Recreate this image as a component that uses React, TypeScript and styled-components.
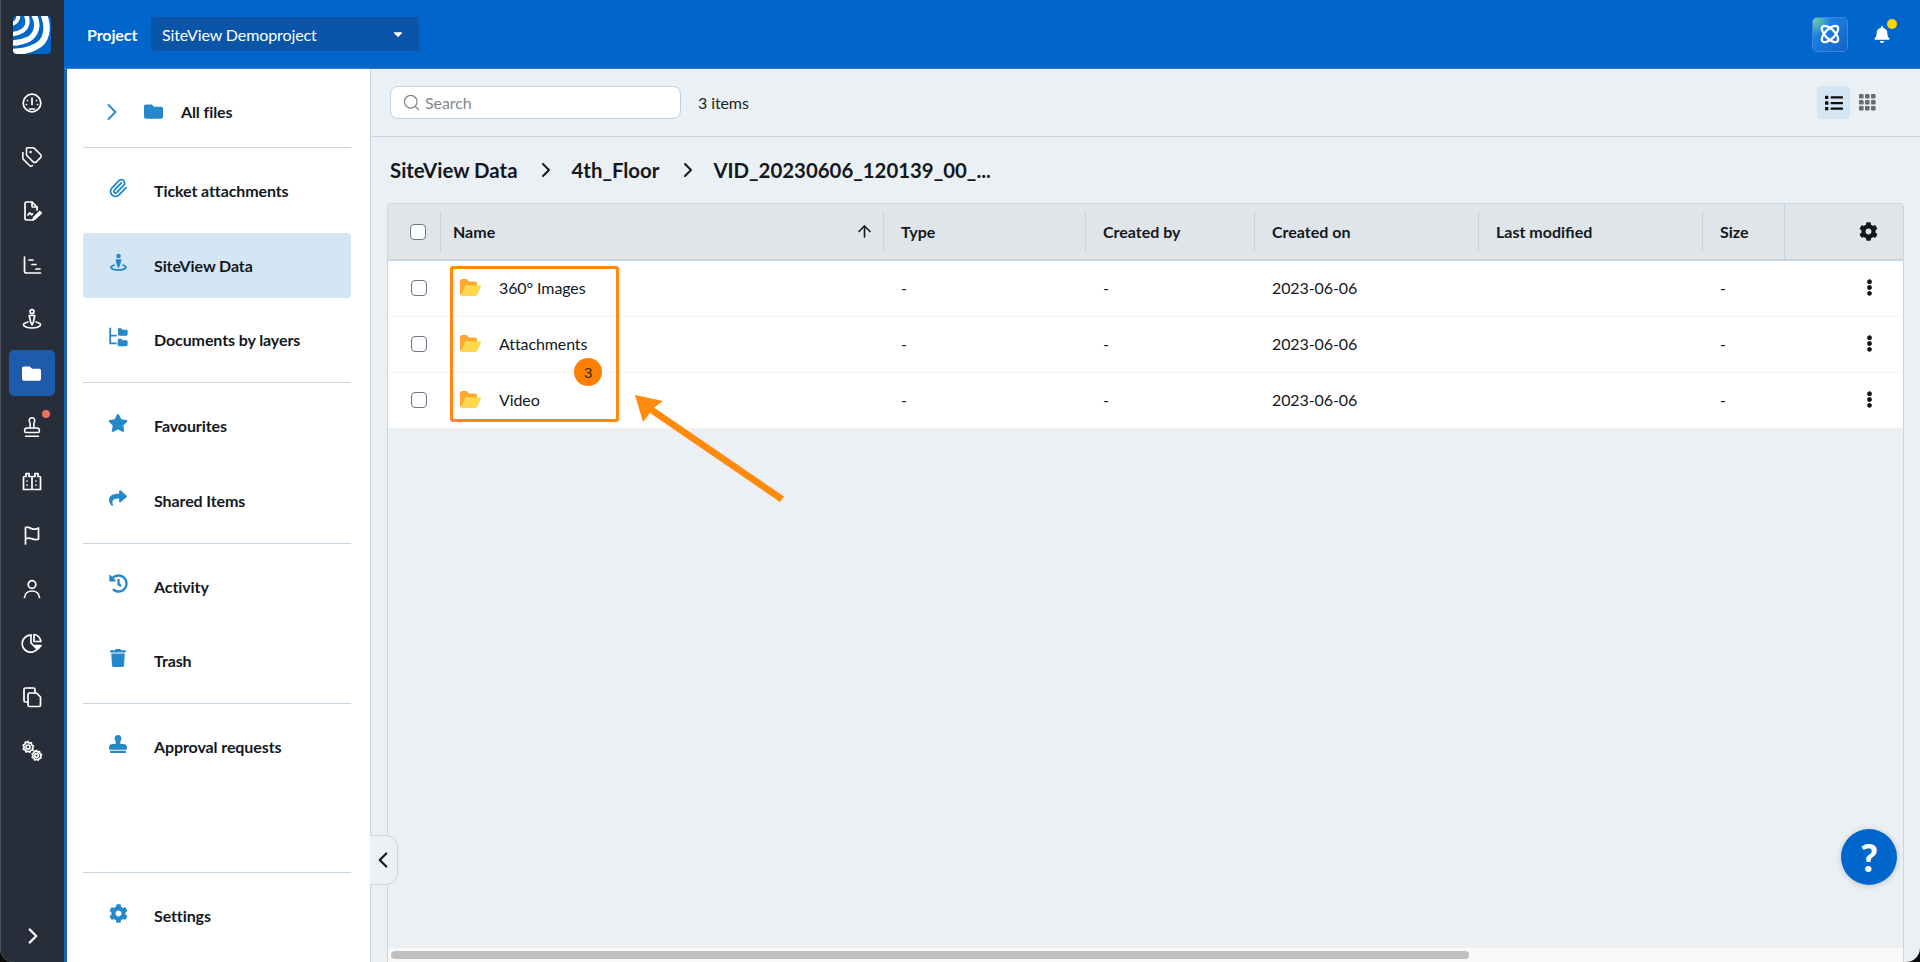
import { ReactNode } from "react";
import styled, { createGlobalStyle } from "styled-components";
import {
  FaBell,
  FaCaretDown,
  FaCog,
  FaEllipsisV,
  FaFolder,
  FaHistory,
  FaList,
  FaShare,
  FaStamp,
  FaStar,
  FaTrash,
} from "react-icons/fa";
import { ArrowUp, ChevronLeft, ChevronRight, Paperclip, Search, Stamp, Tags } from "lucide-react";

const COLUMNS = "52px 443px 202px 169px 224px 224px 82px 1fr";

const GlobalStyle = createGlobalStyle`
  html, body {
    margin: 0;
    height: 100%;
    background: #0b0b0b;
    font-family: "Lato", "Liberation Sans", sans-serif;
    letter-spacing: -0.1px;
    overflow: hidden;
  }
  #root { height: 100%; }
  * { box-sizing: border-box; }
`;

const Shell = styled.div`
  position: relative;
  display: flex;
  height: 962px;
  border-radius: 0 0 14px 14px;
  overflow: hidden;
  background: #ebf0f5;
`;

/* left rail */
const Rail = styled.nav`
  width: 64px;
  flex: none;
  display: flex;
  flex-direction: column;
  align-items: center;
  background: #272e3a;
  border-left: 1px solid #4a515c;
  padding: 16px 2px 13px 0;
`;

const Logo = styled.div`
  width: 38px;
  height: 38px;
  margin-bottom: 26px;
  border-radius: 4px;
  overflow: hidden;
  svg { display: block; }
`;

const RailButton = styled.div<{ $active?: boolean }>`
  position: relative;
  width: 46px;
  height: 46px;
  margin-bottom: 8px;
  display: flex;
  align-items: center;
  justify-content: center;
  color: #fff;
  border-radius: 5px;
  background: ${({ $active }) => ($active ? "#1c5cab" : "transparent")};
`;

const RailDot = styled.span`
  position: absolute;
  top: 6px;
  right: 5px;
  width: 8px;
  height: 8px;
  border-radius: 50%;
  background: #f26d5f;
`;

const RailExpand = styled.div`
  margin: auto 0 0 2px;
  color: #fff;
  display: flex;
`;

/* main */
const Main = styled.div`
  flex: 1;
  min-width: 0;
  display: flex;
  flex-direction: column;
`;

const TopBar = styled.header`
  height: 69px;
  flex: none;
  display: flex;
  align-items: center;
  background: #0066cc;
  border-bottom: 1px solid #2b7fd4;
  padding: 0 30px 0 23px;
  color: #fff;
  font-size: 16px;
`;

const ProjectLabel = styled.span`
  font-weight: 700;
  width: 64px;
`;

const ProjectSelect = styled.div`
  width: 268px;
  height: 34px;
  display: flex;
  align-items: center;
  justify-content: space-between;
  padding: 0 14px 0 11px;
  background: #0a55a8;
  border-radius: 2px;
`;

const TopActions = styled.div`
  margin-left: auto;
  display: flex;
  align-items: center;
  gap: 26px;
`;

const AiButton = styled.div`
  width: 36px;
  height: 35px;
  display: flex;
  align-items: center;
  justify-content: center;
  border-radius: 5px;
  border: 1px solid #3a86e2;
  background: radial-gradient(circle at 0 0, #7ed58f 0, rgba(126, 213, 143, 0) 38%),
    linear-gradient(135deg, #1a90ea 0%, #1560c8 100%);
`;

const Bell = styled.div`
  position: relative;
  display: flex;
  width: 16px;
  color: #fff;
`;

const BellDot = styled.span`
  position: absolute;
  top: -7px;
  right: -7px;
  width: 10px;
  height: 10px;
  border-radius: 50%;
  background: #ffd500;
`;

const Body = styled.div`
  flex: 1;
  min-height: 0;
  display: flex;
`;

/* folder sidebar */
const Sidebar = styled.aside`
  width: 307px;
  flex: none;
  display: flex;
  flex-direction: column;
  background: #fff;
  border-left: 3px solid #1c62b3;
  border-right: 1px solid #c6d3e1;
  padding: 0 19px 0 16px;
`;

const Group = styled.div<{ $first?: boolean; $plain?: boolean; $bottom?: boolean }>`
  display: flex;
  flex-direction: column;
  gap: 9.5px;
  padding: ${({ $first }) => ($first ? "10px 0 3px" : "10px 0")};
  border-bottom: 1px solid #c8d5e3;
  ${({ $plain }) => $plain && "border-bottom: 0;"}
  ${({ $bottom }) => $bottom && "margin-top: auto; border-bottom: 0; border-top: 1px solid #c8d5e3; padding-bottom: 14px;"}
`;

const Item = styled.div<{ $active?: boolean }>`
  height: 65px;
  display: flex;
  align-items: center;
  gap: 24px;
  padding-left: 23px;
  font-size: 16px;
  font-weight: 700;
  color: #14181d;
  border-radius: 4px;
  background: ${({ $active }) => ($active ? "#d4e6f4" : "transparent")};
`;

const ItemIcon = styled.span`
  width: 24px;
  height: 24px;
  display: flex;
  align-items: center;
  justify-content: center;
  margin-bottom: 5px;
  color: #2488c9;
`;

const RootIcons = styled.span`
  display: flex;
  align-items: center;
  gap: 18px;
  margin: 0 -1px 0 -8px;
  color: #2488c9;
`;

const RootLabel = styled.span`
  margin-left: -5px;
`;

/* content */
const Content = styled.section`
  position: relative;
  flex: 1;
  min-width: 0;
  display: flex;
  flex-direction: column;
`;

const Toolbar = styled.div`
  height: 68px;
  flex: none;
  display: flex;
  align-items: center;
  padding: 0 16px 0 19px;
  border-bottom: 1px solid #c8d5e3;
  font-size: 16px;
  color: #1b1f24;
`;

const SearchBox = styled.div`
  width: 291px;
  height: 33px;
  display: flex;
  align-items: center;
  gap: 4px;
  padding-left: 11px;
  background: #fff;
  border: 1px solid #c3d1df;
  border-radius: 8px;
  color: #7f8790;
`;

const ItemCount = styled.span`
  margin-left: 17px;
`;

const ViewToggle = styled.div`
  margin-left: auto;
  display: flex;
  align-items: center;
  gap: 9px;
  margin-right: 28px;
`;

const ViewButton = styled.div<{ $active?: boolean }>`
  width: 33px;
  height: 33px;
  display: flex;
  align-items: center;
  justify-content: center;
  border-radius: 4px;
  background: ${({ $active }) => ($active ? "#d4e6f4" : "transparent")};
  color: #0d0d0d;
`;

const Breadcrumb = styled.div`
  height: 66px;
  flex: none;
  display: flex;
  align-items: center;
  padding-left: 19px;
  font-size: 20.4px;
  font-weight: 700;
  letter-spacing: 0;
  color: #14181d;
`;

const CrumbSep = styled.span`
  display: flex;
  width: 54px;
  justify-content: center;
  padding-left: 4px;
`;

const Table = styled.div`
  flex: 1;
  min-height: 0;
  display: flex;
  flex-direction: column;
  margin: 0 16px;
  border: 1px solid #c8d5e3;
  border-bottom: 0;
  border-radius: 4px 4px 0 0;
`;

const HeadRow = styled.div`
  height: 57px;
  flex: none;
  display: grid;
  grid-template-columns: ${COLUMNS};
  align-items: center;
  background: #e0e5ea;
  border-bottom: 2px solid #c8d5e3;
  font-size: 16px;
  font-weight: 700;
  letter-spacing: 0;
  color: #14181d;
`;

const HeadCell = styled.div<{ $tight?: boolean }>`
  height: 41px;
  display: flex;
  align-items: center;
  justify-content: space-between;
  padding-left: ${({ $tight }) => ($tight ? "12px" : "17px")};
  border-left: 1px solid #c8d2dc;
`;

const GearHead = styled.div`
  height: 100%;
  display: flex;
  align-items: center;
  justify-content: flex-end;
  padding-right: 25px;
  border-left: 1px solid #c8d5e3;
`;

const CheckCell = styled.div<{ $row?: boolean }>`
  display: flex;
  justify-content: center;
  padding-left: ${({ $row }) => ($row ? "10px" : "8px")};
`;

const Checkbox = styled.span`
  width: 16px;
  height: 16px;
  background: #fff;
  border: 1.5px solid #6d7784;
  border-radius: 4px;
`;

const SortIcon = styled.span`
  display: flex;
  margin-right: 9px;
`;

const Row = styled.div`
  height: 56px;
  flex: none;
  display: grid;
  grid-template-columns: ${COLUMNS};
  align-items: center;
  padding-bottom: 2px;
  background: #fff;
  border-bottom: 1px solid #f1f3f5;
  font-size: 16px;
  color: #14181d;
`;

const Cell = styled.div`
  padding-left: 18px;
`;

const NameCell = styled.div`
  display: flex;
  align-items: center;
  gap: 18px;
  padding-left: 20px;
`;

const KebabCell = styled.div`
  display: flex;
  justify-content: flex-end;
  padding-right: 25px;
`;

const Scroller = styled.div`
  margin-top: auto;
  height: 15px;
  flex: none;
  display: flex;
  align-items: center;
  padding-left: 3px;
  background: #f8f8f8;
  border-top: 1px solid #eeeeee;
`;

const ScrollThumb = styled.div`
  width: 1078px;
  height: 8px;
  border-radius: 4px;
  background: #bfbfbf;
`;

/* things lying over the page */
const CollapseHandle = styled.div`
  position: absolute;
  left: -1px;
  top: 766px;
  width: 28px;
  height: 50px;
  display: flex;
  align-items: center;
  color: #14181d;
  background: #ebf0f5;
  border: 1px solid #c8d5e3;
  border-left: 0;
  border-radius: 0 12px 12px 0;
`;

const HelpButton = styled.div`
  position: absolute;
  right: 23px;
  top: 760px;
  width: 56px;
  height: 56px;
  display: flex;
  align-items: center;
  justify-content: center;
  border-radius: 50%;
  background: #0066cc;
  box-shadow: 0 1px 6px rgba(0, 0, 0, 0.18);
  color: #fff;
  font-size: 38px;
  font-weight: 900;
`;

const Highlight = styled.div`
  position: absolute;
  left: 450px;
  top: 266px;
  width: 169px;
  height: 156px;
  border: 3px solid #ff8a0d;
  border-radius: 3px;
`;

const StepBadge = styled.div`
  position: absolute;
  left: 574px;
  top: 358px;
  width: 28px;
  height: 28px;
  display: flex;
  align-items: center;
  justify-content: center;
  border-radius: 50%;
  background: #ff8000;
  color: #3a2a10;
  font-family: "Liberation Sans", sans-serif;
  font-size: 15px;
`;

const Arrow = styled.svg`
  position: absolute;
  left: 630px;
  top: 390px;
`;

function Ic({ children, size = 24 }: { children: ReactNode; size?: number }) {
  return (
    <svg width={size} height={size} viewBox="0 0 24 24" fill="none" stroke="currentColor" strokeWidth="1.7" strokeLinecap="round" strokeLinejoin="round">
      {children}
    </svg>
  );
}

function PinIcon({ size = 24 }: { size?: number }) {
  return (
    <svg width={size} height={size} viewBox="0 0 24 24" fill="currentColor">
      <circle cx="12" cy="4.5" r="2.6" />
      <path d="M8.5 8.2h7l-1.700 6.800L12 18.500 10.200 15z" />
      <path d="M7.500 14C4.300 14.800 2.500 16 2.500 17.600 2.500 19.800 6.700 21.500 12 21.500s9.500-1.700 9.500-3.900c0-1.600-1.800-2.800-5-3.600l-.4 1.800c1.900.5 3.100 1.100 3.100 1.800 0 .9-3.100 1.900-7.200 1.900s-7.200-1-7.200-1.900c0-.7 1.200-1.300 3.100-1.800z" />
    </svg>
  );
}

function LayersIcon() {
  return (
    <svg width="22" height="22" viewBox="0 0 24 24" fill="currentColor">
      <path d="M2.500 2h2v7.500h6v2h-6V18h6v2h-8z" />
      <path d="M12 2.500h3.500l1.500 1.500h4a1.500 1.500 0 0 1 1.500 1.500V9a1.500 1.500 0 0 1-1.500 1.500h-8A1.500 1.500 0 0 1 12 9z" />
      <path d="M12 14h3.500l1.500 1.500h4a1.500 1.500 0 0 1 1.500 1.500v3.500A1.500 1.500 0 0 1 21 22h-8a1.500 1.500 0 0 1-1.500-1.500z" />
    </svg>
  );
}

function FolderOpen() {
  return (
    <svg width="21" height="17" viewBox="0 0 21 17">
      <path d="M0 2a2 2 0 0 1 2-2h5l2 2.500h6a2 2 0 0 1 2 2V7H5L1.500 16H1a1 1 0 0 1-1-1z" fill="#ffa92e" />
      <path d="M5 6.200h15a1 1 0 0 1 .9 1.400l-3.400 8.200a2 2 0 0 1-1.800 1.200H1z" fill="#ffd84d" />
    </svg>
  );
}

function GridIcon() {
  const cells = [0, 6, 12];
  return (
    <svg width="17" height="17" viewBox="0 0 17 17" fill="#6b6b6b">
      {cells.flatMap((y) => cells.map((x) => <rect key={`${x}-${y}`} x={x} y={y} width="4.6" height="4.6" rx="1.1" />))}
    </svg>
  );
}

const railIcons: ReactNode[] = [
  <Ic key="gauge">
    <circle cx="12" cy="12" r="8.8" />
    <path d="M12 7v6.500M7.500 9.500v.01M16.500 9.500v.01M6.500 13.500v.01M17.500 13.500v.01M9.500 18h5" />
  </Ic>,
  <Tags key="tags" size={22} strokeWidth={1.7} />,
  <Ic key="file">
    <path d="M13 21H6.500A1.500 1.500 0 0 1 5 19.500v-15A1.500 1.500 0 0 1 6.500 3H12l5 5v3" />
    <path d="M12 3v4a1 1 0 0 0 1 1h4M8 16l1.800-2.200 1.700 2 1-1" />
    <path d="M15 20l-2 .8.7-2.200 6-6 1.500 1.500z" fill="currentColor" />
  </Ic>,
  <Ic key="chart">
    <path d="M4.500 4v14a2 2 0 0 0 2 2h14M9 7h4M12 11.500h4M16 16h4" />
  </Ic>,
  <Ic key="pin">
    <circle cx="12" cy="4.600" r="2" />
    <path d="M9.200 8.500h5.600L13.400 15 12 18l-1.400-3z" />
    <path d="M8 15c-2.700.6-4.500 1.600-4.500 2.800C3.500 19.600 7.300 21 12 21s8.500-1.400 8.500-3.200c0-1.200-1.800-2.200-4.500-2.800" />
  </Ic>,
  <FaFolder key="folder" size={19} />,
  <Stamp key="stamp" size={22} strokeWidth={1.7} />,
  <Ic key="building">
    <path d="M3.500 20.500V8.500a1 1 0 0 1 1-1H6V4.500h3v3h6V4.500h3v3h1.500a1 1 0 0 1 1 1v12zM12 7.500v13M7 12v.01M7 16v.01M16 12v.01M16 16v.01" />
  </Ic>,
  <Ic key="flag">
    <path d="M5.500 21V4.500C9 3 11 6.800 15 6.200c1.300-.2 2.500-.7 3.500-1.200v11c-3.800 2-6.700-1-10-.8-1.100 0-2.200.3-3 .8" />
  </Ic>,
  <Ic key="user">
    <circle cx="12" cy="7.500" r="3.800" />
    <path d="M4.500 20.500c.4-4.200 3.700-6.500 7.500-6.500s7.100 2.300 7.500 6.500" />
  </Ic>,
  <Ic key="pie">
    <path d="M11 4.200A8.500 8.500 0 1 0 18 17" />
    <path d="M11 4.200V12l5 5" />
    <path d="M14 3.500a7.500 7.500 0 0 1 6.800 7H14z" />
    <path d="M15 14.500h6l-3 3.500z" fill="currentColor" />
  </Ic>,
  <Ic key="copy">
    <path d="M10 3H5.500A1.500 1.500 0 0 0 4 4.500v11A1.500 1.500 0 0 0 5.500 17H8" />
    <path d="M10 3h3.500A1.500 1.500 0 0 1 15 4.500V8" />
    <path d="M9.500 8h7l4 4v8a1.500 1.500 0 0 1-1.500 1.500H9.500A1.500 1.500 0 0 1 8 20V9.500A1.500 1.500 0 0 1 9.500 8z" />
  </Ic>,
  <Ic key="gears">
    <circle cx="8" cy="8" r="2" />
    <path d="M8 2.500l1.200 1.700 2.100-.4.3 2.100 1.900 1-1 1.900.5 2-2.100.5-1 1.900-1.900-1-2 .7-.7-2-2-.8.8-2-1-1.900 1.900-1 .4-2.100 2.100.4z" />
    <circle cx="16.500" cy="16.500" r="1.800" />
    <path d="M16.500 11.500l1.100 1.500 1.900-.3.3 1.900 1.700.9-.9 1.700.4 1.800-1.900.5-.9 1.700-1.700-.9-1.800.6-.6-1.800-1.800-.7.7-1.800-.9-1.700 1.700-.9.4-1.900 1.900.4z" />
  </Ic>,
];

const rows = ["360° Images", "Attachments", "Video"];

export default function App() {
  return (
    <>
      <GlobalStyle />
      <Shell>
        <Rail>
          <Logo>
            <svg width="38" height="38" viewBox="0 0 38 38">
              <rect width="38" height="38" fill="#0066cc" />
              <g fill="none" stroke="#fff">
                <path d="M5 -1C6 3 3 7 -1 8" strokeWidth="4" />
                <path d="M13 -1C16 6 14 12 9 15C6 17 3 18 -1 18" strokeWidth="4.500" />
                <path d="M21 -1C26 8 24 18 16 23C10 26 5 27 -1 27" strokeWidth="5.500" />
                <path d="M31 -1C36 12 34 26 22 31C14 35 6 36 -1 36" strokeWidth="6.500" />
              </g>
            </svg>
          </Logo>
          {railIcons.map((icon, i) => (
            <RailButton key={i} $active={i === 5}>
              {icon}
              {i === 6 && <RailDot />}
            </RailButton>
          ))}
          <RailExpand>
            <ChevronRight size={26} strokeWidth={2.2} />
          </RailExpand>
        </Rail>

        <Main>
          <TopBar>
            <ProjectLabel>Project</ProjectLabel>
            <ProjectSelect>
              SiteView Demoproject
              <FaCaretDown size={14} />
            </ProjectSelect>
            <TopActions>
              <AiButton>
                <svg width="26" height="26" viewBox="0 0 26 26" fill="none" stroke="#fff" strokeWidth="2.2" strokeLinecap="round">
                  <ellipse cx="13" cy="13" rx="10.500" ry="4.800" transform="rotate(45 13 13)" />
                  <ellipse cx="13" cy="13" rx="10.500" ry="4.800" transform="rotate(-45 13 13)" />
                </svg>
              </AiButton>
              <Bell>
                <FaBell size={17} />
                <BellDot />
              </Bell>
            </TopActions>
          </TopBar>

          <Body>
            <Sidebar>
              <Group $first>
                <Item>
                  <RootIcons>
                    <ChevronRight size={28} strokeWidth={1.6} />
                    <FaFolder size={19} />
                  </RootIcons>
                  <RootLabel>All files</RootLabel>
                </Item>
              </Group>
              <Group>
                <Item>
                  <ItemIcon><Paperclip size={20} strokeWidth={2.2} /></ItemIcon>
                  Ticket attachments
                </Item>
                <Item $active>
                  <ItemIcon><PinIcon size={21} /></ItemIcon>
                  SiteView Data
                </Item>
                <Item>
                  <ItemIcon><LayersIcon /></ItemIcon>
                  Documents by layers
                </Item>
              </Group>
              <Group>
                <Item>
                  <ItemIcon><FaStar size={20} /></ItemIcon>
                  Favourites
                </Item>
                <Item>
                  <ItemIcon><FaShare size={18} /></ItemIcon>
                  Shared Items
                </Item>
              </Group>
              <Group>
                <Item>
                  <ItemIcon><FaHistory size={19} /></ItemIcon>
                  Activity
                </Item>
                <Item>
                  <ItemIcon><FaTrash size={18} /></ItemIcon>
                  Trash
                </Item>
              </Group>
              <Group $plain>
                <Item>
                  <ItemIcon><FaStamp size={18} /></ItemIcon>
                  Approval requests
                </Item>
              </Group>
              <Group $bottom>
                <Item>
                  <ItemIcon><FaCog size={19} /></ItemIcon>
                  Settings
                </Item>
              </Group>
            </Sidebar>

            <Content>
              <Toolbar>
                <SearchBox>
                  <Search size={19} strokeWidth={1.6} />
                  Search
                </SearchBox>
                <ItemCount>3 items</ItemCount>
                <ViewToggle>
                  <ViewButton $active><FaList size={18} /></ViewButton>
                  <GridIcon />
                </ViewToggle>
              </Toolbar>

              <Breadcrumb>
                SiteView Data
                <CrumbSep><ChevronRight size={24} strokeWidth={2} /></CrumbSep>
                4th_Floor
                <CrumbSep><ChevronRight size={24} strokeWidth={2} /></CrumbSep>
                VID_20230606_120139_00_...
              </Breadcrumb>

              <Table>
                <HeadRow>
                  <CheckCell><Checkbox /></CheckCell>
                  <HeadCell $tight>
                    Name
                    <SortIcon><ArrowUp size={19} strokeWidth={2} /></SortIcon>
                  </HeadCell>
                  <HeadCell>Type</HeadCell>
                  <HeadCell>Created by</HeadCell>
                  <HeadCell>Created on</HeadCell>
                  <HeadCell>Last modified</HeadCell>
                  <HeadCell>Size</HeadCell>
                  <GearHead><FaCog size={19} /></GearHead>
                </HeadRow>
                {rows.map((name) => (
                  <Row key={name}>
                    <CheckCell $row><Checkbox /></CheckCell>
                    <NameCell>
                      <FolderOpen />
                      {name}
                    </NameCell>
                    <Cell>-</Cell>
                    <Cell>-</Cell>
                    <Cell>2023-06-06</Cell>
                    <Cell />
                    <Cell>-</Cell>
                    <KebabCell><FaEllipsisV size={17} /></KebabCell>
                  </Row>
                ))}
                <Scroller><ScrollThumb /></Scroller>
              </Table>

              <CollapseHandle><ChevronLeft size={26} strokeWidth={2} /></CollapseHandle>
              <HelpButton>?</HelpButton>
            </Content>
          </Body>
        </Main>

        <Highlight />
        <StepBadge>3</StepBadge>
        <Arrow width="160" height="114" viewBox="0 0 160 114">
          <path d="M5 5l28 6-9 6.500 130 89-4 5.500-130-89-7 9z" fill="#ff8a0d" />
        </Arrow>
      </Shell>
    </>
  );
}
